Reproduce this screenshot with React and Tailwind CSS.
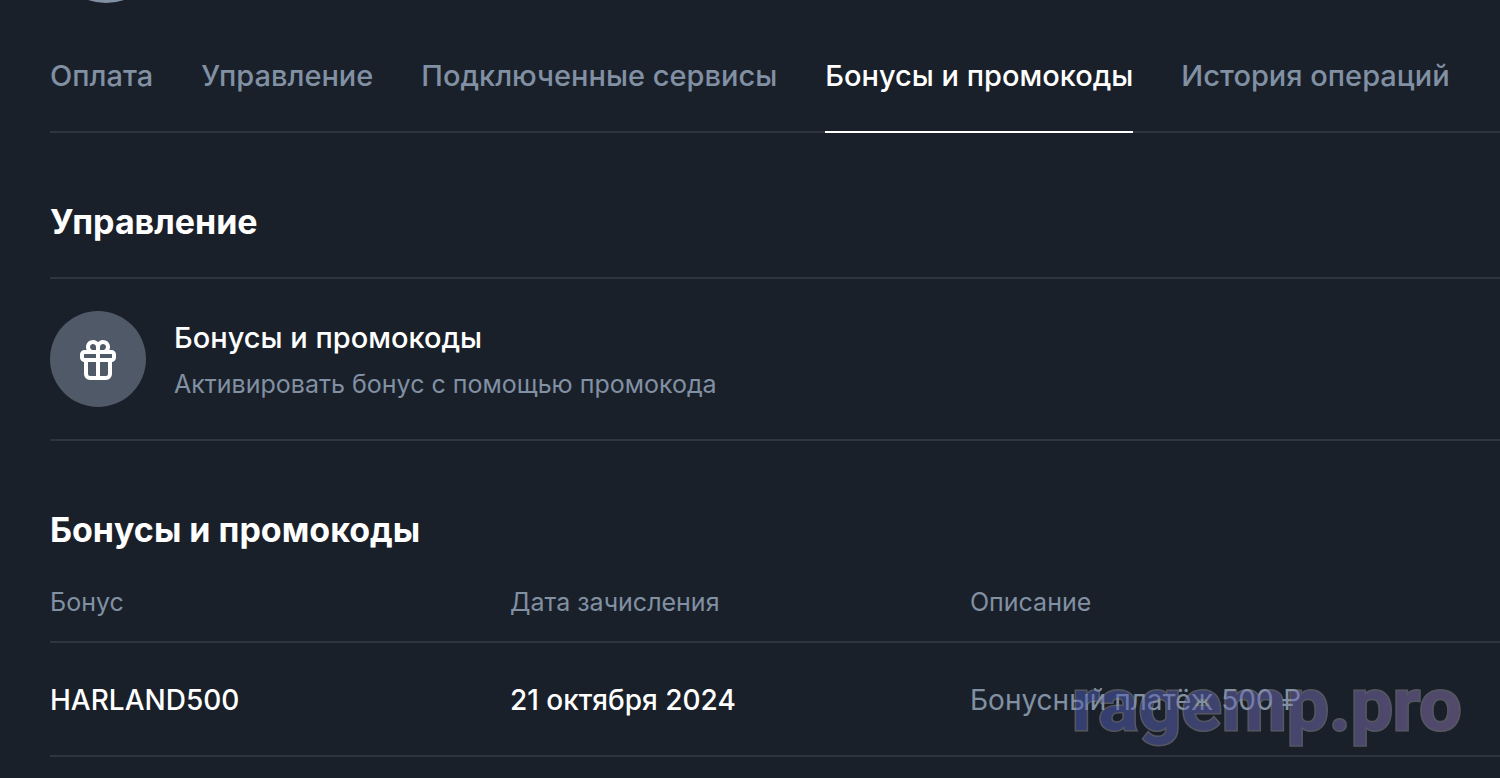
const TABS = [
  { id: "payment", label: "Оплата" },
  { id: "manage", label: "Управление" },
  { id: "services", label: "Подключенные сервисы" },
  { id: "bonuses", label: "Бонусы и промокоды" },
  { id: "history", label: "История операций" },
];

const BONUSES = [{ code: "HARLAND500", date: "21 октября 2024", note: "Бонусный платёж 500 ₽" }];

function GiftIcon() {
  return (
    <svg viewBox="0 0 40 44" className="h-11 w-10" fill="none" stroke="currentColor" strokeWidth="4" strokeLinejoin="round" aria-hidden="true">
      <rect x="4" y="15" width="32" height="8" rx="2.500" />
      <path d="M8 23v14a4 4 0 0 0 4 4h16a4 4 0 0 0 4-4V23" />
      <path d="M20 9v32" />
      <path d="M20 15v-5a5 5 0 1 0-8.500 3.500L13 15M20 15v-5a5 5 0 1 1 8.500 3.500L27 15" />
    </svg>
  );
}

function Tabs({ active }) {
  return (
    <nav className="flex gap-12 border-b-2 border-[#2e3541] text-[29px] whitespace-nowrap">
      {TABS.map((tab) => (
        <a
          key={tab.id}
          href={`#${tab.id}`}
          aria-current={tab.id === active ? "page" : undefined}
          className={
            tab.id === active
              ? "-mb-0.5 border-b-2 border-white pb-[37px] text-white"
              : "pb-[37px] text-[#8190a3]"
          }
        >
          {tab.label}
        </a>
      ))}
    </nav>
  );
}

function Watermark() {
  return (
    <svg className="pointer-events-none absolute top-[660px] right-0 h-[118px] w-[440px]" viewBox="0 0 440 118" aria-hidden="true">
      <defs>
        <linearGradient id="mark" x1="0" x2="1" y1="0" y2="0">
          <stop offset="0" stopColor="#4b5db4" />
          <stop offset="1" stopColor="#8d75ac" />
        </linearGradient>
      </defs>
      <g opacity="0.5">
        <text x="12" y="70" className="font-['Roboto',sans-serif] text-[75px] font-bold [paint-order:stroke]" fill="url(#mark)" stroke="#8f8f94" strokeWidth="3">
          ragemp.pro
        </text>
      </g>
    </svg>
  );
}

export default function App() {
  return (
    <div className="relative min-h-screen overflow-hidden bg-[#1a202a] pl-[50px] font-['Inter',sans-serif] text-[28px] leading-9 font-medium text-white">
      <header className="flex h-[3px] items-end overflow-hidden">
        <div className="size-28 shrink-0 rounded-full bg-[#8190a3]" />
      </header>

      <div className="pt-[55px]">
        <Tabs active="bonuses" />
      </div>

      <section className="pt-[69px]">
        <h2 className="text-[34px] leading-10 font-bold">Управление</h2>
        <button type="button" className="mt-[35px] flex w-full items-center gap-7 border-y-2 border-[#2e3541] py-8 text-left">
          <span className="flex size-24 shrink-0 items-center justify-center rounded-full bg-[#505967]">
            <GiftIcon />
          </span>
          <span className="flex flex-col gap-2.5 pt-1">
            <span className="text-[29px]">Бонусы и промокоды</span>
            <span className="text-[25px] font-normal text-[#8190a3]">Активировать бонус с помощью промокода</span>
          </span>
        </button>
      </section>

      <section className="pt-[69px]">
        <h2 className="text-[34px] leading-10 font-bold">Бонусы и промокоды</h2>
        <table className="mt-[34px] w-full table-fixed text-left">
          <thead className="text-[25px] text-[#8190a3]">
            <tr className="border-b-2 border-[#2e3541]">
              <th className="w-[460px] pb-[21px] font-normal">Бонус</th>
              <th className="w-[460px] pb-[21px] font-normal">Дата зачисления</th>
              <th className="pb-[21px] font-normal">Описание</th>
            </tr>
          </thead>
          <tbody>
            {BONUSES.map((b) => (
              <tr key={b.code} className="border-b-2 border-[#2e3541]">
                <td className="pt-[39px] pb-[37px]">{b.code}</td>
                <td className="pt-[39px] pb-[37px]">{b.date}</td>
                <td className="pt-[39px] pb-[37px] font-normal text-[#8190a3]">{b.note}</td>
              </tr>
            ))}
          </tbody>
        </table>
      </section>

      <Watermark />
    </div>
  );
}
